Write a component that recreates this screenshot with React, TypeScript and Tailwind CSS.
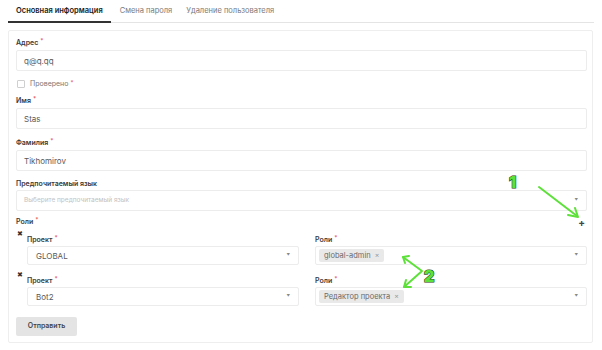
import React from 'react';

const Star = () => <span className="text-[#e5484d] ml-[2px] relative -top-[2px] text-[6px]">*</span>;

const Label = ({ text, req, className = '' }: { text: string; req?: boolean; className?: string }) => (
  <div className={`h-[8px] leading-[8px] text-[7px] font-semibold text-[#3a3a3a] whitespace-nowrap ${className}`}>
    {text}
    {req && <Star />}
  </div>
);

const Input = ({ value, className = '' }: { value: string; className?: string }) => (
  <div className={`flex items-center border border-[#ececec] rounded-[2px] pl-[7px] text-[8px] text-[#5a5a5a] ${className}`}>
    {value}
  </div>
);

const Caret = () => <span className="ml-auto mr-[8px] text-[3.5px] text-[#888] leading-none">▼</span>;

const Tag = ({ text }: { text: string }) => (
  <span className="flex items-center h-[13px] px-[5px] rounded-[2px] bg-[#e9e9e9] text-[7.5px] text-[#6a6a6a]">
    {text}
    <span className="ml-[4px] text-[7px] text-[#999]">×</span>
  </span>
);

const RoleRow = ({ project, role, className = '' }: { project: string; role: string; className?: string }) => (
  <div className={`flex ${className}`}>
    <div className="w-[11px] shrink-0 pl-[1px] -mt-[6px] text-[7px] leading-[8px] text-[#333]">✖</div>
    <div className="grid grid-cols-2 gap-[16px] flex-1">
      <div>
        <Label text="Проект" req />
        <div className="mt-[2px] h-[19px] flex items-center border border-[#ececec] rounded-[2px] pl-[8px] text-[8px] text-[#5a5a5a]">
          {project}
          <Caret />
        </div>
      </div>
      <div>
        <Label text="Роли" req />
        <div className="mt-[2px] h-[19px] flex items-center border border-[#ececec] rounded-[2px] pl-[3px]">
          <Tag text={role} />
          <Caret />
        </div>
      </div>
    </div>
  </div>
);

const Arrows = () => (
  <svg className="absolute left-0 top-0 pointer-events-none" width="602" height="350" viewBox="0 0 602 350">
    <g stroke="#5ee03a" strokeWidth="2" fill="none" strokeLinecap="round" strokeLinejoin="round">
      <line x1="539" y1="187" x2="577" y2="216" />
      <polyline points="568,215 578,217 575,208" />
      <polyline points="403,257 422,271 404,287" />
      <polyline points="405,263 403,257 409,256" />
      <polyline points="406,280 404,287 411,287" />
    </g>
    <g fontFamily="Inter, sans-serif" fontWeight="900" fill="#5ee03a" stroke="#1d3a12" strokeWidth="1.2" paintOrder="stroke">
      <text x="509" y="188" fontSize="16">1</text>
      <text x="424" y="282" fontSize="16">2</text>
    </g>
  </svg>
);

export default function App() {
  return (
    <div className="relative w-[602px] h-[350px] bg-white font-['Inter',sans-serif] overflow-hidden">
      {/* tabs */}
      <div className="flex items-end h-[23px] mx-[8px] border-b border-[#e4e4e4]">
        <div className="h-[23px] px-[8px] flex items-center border-b-2 border-[#333] -mb-[1px] text-[7.5px] font-semibold text-[#222]">
          Основная информация
        </div>
        <div className="h-[23px] px-[9px] flex items-center text-[7.5px] text-[#7a7a7a]">Смена пароля</div>
        <div className="h-[23px] px-[5px] flex items-center text-[7.5px] text-[#7a7a7a]">Удаление пользователя</div>
      </div>

      {/* card */}
      <div className="ml-[8px] mt-[7px] w-[585px] border border-[#eeeeee] rounded-[2px] pl-[7px] pr-[5px] pb-[6px]">
        <Label text="Адрес" req className="mt-[8px]" />
        <Input value="q@q.qq" className="mt-[3px] h-[21px]" />

        <div className="mt-[8px] h-[10px] flex items-center">
          <span className="w-[8px] h-[8px] ml-[1px] border border-[#cfcfcf] rounded-[1px] bg-white" />
          <span className="ml-[5px] text-[7px] text-[#777]">Проверено</span>
          <Star />
        </div>

        <Label text="Имя" req className="mt-[8px]" />
        <Input value="Stas" className="mt-[3px] h-[21px]" />

        <Label text="Фамилия" req className="mt-[10px]" />
        <Input value="Tikhomirov" className="mt-[3px] h-[21px]" />

        <Label text="Предпочитаемый язык" className="mt-[9px]" />
        <div className="mt-[2px] h-[21px] flex items-center border border-[#ececec] rounded-[2px] pl-[7px] text-[6.5px] text-[#c2c2c2]">
          Выберите предпочитаемый язык
          <Caret />
        </div>

        <div className="mt-[7px] flex items-center justify-between">
          <Label text="Роли" req />
          <span className="mr-[2px] text-[10px] font-bold leading-[8px] text-[#444]">+</span>
        </div>

        <RoleRow project="GLOBAL" role="global-admin" className="mt-[10px]" />
        <RoleRow project="Bot2" role="Редактор проекта" className="mt-[12px]" />

        <button className="mt-[11px] h-[19px] w-[61px] bg-[#e4e4e4] rounded-[2px] text-[7px] font-semibold text-[#444]">
          Отправить
        </button>
      </div>

      <Arrows />
    </div>
  );
}
